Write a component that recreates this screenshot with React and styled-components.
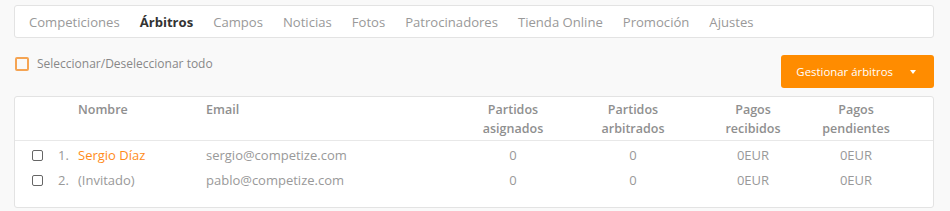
import React from "react";
import styled, { createGlobalStyle } from "styled-components";

const GlobalStyle = createGlobalStyle`
  html, body {
    margin: 0;
    padding: 0;
    background: #f9f9f9;
  }
  body {
    font-family: "Open Sans", "Liberation Sans", sans-serif;
    color: #999;
  }
`;

const Page = styled.div`
  width: 920px;
  padding: 5px 16px 4px 14px;
`;

const Nav = styled.nav`
  display: flex;
  align-items: center;
  gap: 20px;
  height: 33px;
  box-sizing: border-box;
  padding: 0 14px;
  background: #fff;
  border: 1px solid #e3e3e3;
  border-radius: 3px;
  font-size: 13.1px;
`;

const NavItem = styled.a`
  color: ${(p) => (p.$active ? "#333" : "#999")};
  font-weight: ${(p) => (p.$active ? 700 : 400)};
  text-decoration: none;
  white-space: nowrap;
`;

const Toolbar = styled.div`
  display: flex;
  justify-content: space-between;
  align-items: flex-start;
  margin-top: 17px;
`;

const SelectAll = styled.label`
  display: flex;
  align-items: center;
  gap: 8px;
  font-size: 12px;
  color: #888;
`;

const OrangeBox = styled.span`
  width: 10px;
  height: 10px;
  margin-left: 1px;
  border: 2px solid #f5a453;
  border-radius: 2px;
`;

const Button = styled.button`
  display: flex;
  align-items: center;
  gap: 17px;
  height: 33px;
  padding: 0 18px 0 15px;
  border: none;
  border-radius: 3px;
  background: #ff8c00;
  color: #fff;
  font-family: inherit;
  font-size: 11.4px;
  font-weight: 500;
  cursor: pointer;
`;

const Caret = styled.span`
  width: 0;
  height: 0;
  border-left: 3px solid transparent;
  border-right: 3px solid transparent;
  border-top: 4px solid #fff;
`;

const Table = styled.div`
  margin-top: 8px;
  background: #fff;
  border: 1px solid #e3e3e3;
  border-radius: 3px;
  padding-bottom: 14px;
`;

const Row = styled.div`
  display: grid;
  grid-template-columns: 26px 20px 128px 247px 120px 120px 120px 86px;
  padding: 0 35px 0 17px;
  align-items: ${(p) => (p.$head ? "start" : "center")};
  height: ${(p) => (p.$head ? "44px" : "25px")};
  padding-top: ${(p) => (p.$head ? "3px" : "0")};
  box-sizing: border-box;
  border-bottom: ${(p) => (p.$head ? "1px solid #e8e8e8" : "none")};
  margin-bottom: ${(p) => (p.$head ? "2px" : "0")};
  font-size: 13px;
  line-height: 19px;
`;

const Th = styled.div`
  font-weight: 600;
  font-size: 12.5px;
  color: #8f8f8f;
  text-align: ${(p) => (p.$center ? "center" : "left")};
`;

const Td = styled.div`
  color: ${(p) => (p.$orange ? "#ff8c1a" : "#999")};
  text-align: ${(p) => (p.$center ? "center" : "left")};
  white-space: nowrap;
`;

const Check = styled.span`
  display: block;
  width: 9px;
  height: 9px;
  border: 1px solid #666;
  border-radius: 2px;
`;

const tabs = [
  "Competiciones",
  "Árbitros",
  "Campos",
  "Noticias",
  "Fotos",
  "Patrocinadores",
  "Tienda Online",
  "Promoción",
  "Ajustes",
];

const referees = [
  { name: "Sergio Díaz", email: "sergio@competize.com", registered: true },
  { name: "(Invitado)", email: "pablo@competize.com", registered: false },
];

export default function App() {
  return (
    <>
      <GlobalStyle />
      <Page>
        <Nav>
          {tabs.map((t) => (
            <NavItem key={t} $active={t === "Árbitros"}>
              {t}
            </NavItem>
          ))}
        </Nav>
        <Toolbar>
          <SelectAll>
            <OrangeBox />
            Seleccionar/Deseleccionar todo
          </SelectAll>
          <Button>
            Gestionar árbitros
            <Caret />
          </Button>
        </Toolbar>
        <Table>
          <Row $head>
            <div />
            <div />
            <Th>Nombre</Th>
            <Th>Email</Th>
            <Th $center>
              Partidos
              <br />
              asignados
            </Th>
            <Th $center>
              Partidos
              <br />
              arbitrados
            </Th>
            <Th $center>
              Pagos
              <br />
              recibidos
            </Th>
            <Th $center>
              Pagos
              <br />
              pendientes
            </Th>
          </Row>
          {referees.map((r, i) => (
            <Row key={r.email}>
              <Check />
              <Td>{i + 1}.</Td>
              <Td $orange={r.registered}>{r.name}</Td>
              <Td>{r.email}</Td>
              <Td $center>0</Td>
              <Td $center>0</Td>
              <Td $center>0EUR</Td>
              <Td $center>0EUR</Td>
            </Row>
          ))}
        </Table>
      </Page>
    </>
  );
}
